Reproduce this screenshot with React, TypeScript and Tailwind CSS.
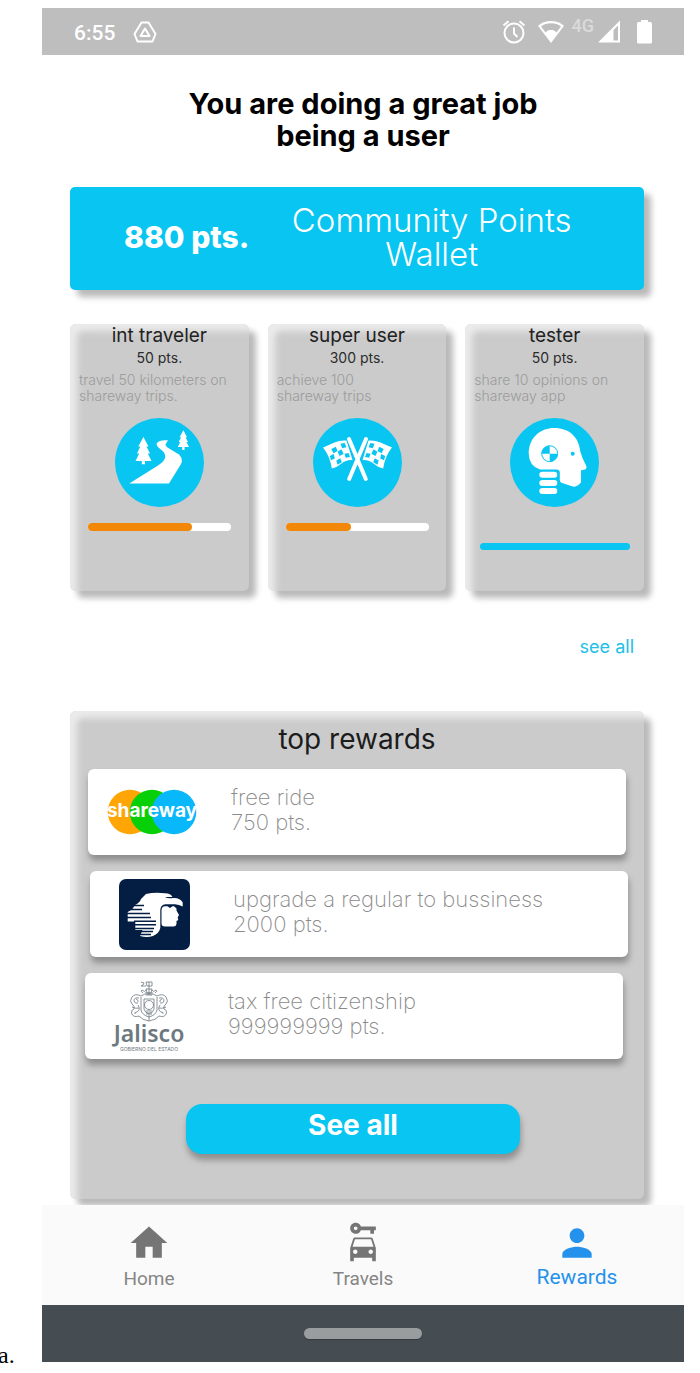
import type { ReactNode } from "react";
import { MdCarRental, MdHome, MdPerson } from "react-icons/md";

const SOFT_PANEL =
  "rounded-md bg-[#cbcbcb] shadow-[7px_7px_6px_#b9b9b9,inset_7px_7px_6px_#ebebeb]";

function StatusBar() {
  return (
    <header className="flex h-[47px] items-center bg-[#bebebe] px-8 text-white">
      <span className="pt-0.5 font-[Roboto] text-[21px] leading-6 font-medium">6:55</span>
      <svg className="ml-[18px] h-6 w-6" viewBox="0 0 24 24" fill="none" stroke="currentColor" strokeWidth="2" strokeLinejoin="round">
        <path d="M8.500 2.500h7L22.500 14l-3 7.500H4.500L1.500 14Z" />
        <path d="M12 8.500 16.500 16h-9Z" />
      </svg>
      <div className="ml-auto flex items-center">
        <svg className="h-6 w-6" viewBox="0 0 24 24" fill="none" stroke="currentColor" strokeWidth="2">
          <circle cx="12" cy="13" r="9.500" />
          <path d="M12 7.500v6l3.500 3.500M1.500 5.500 6.500 1.300M22.500 5.500 17.500 1.300" />
        </svg>
        <svg className="ml-3 h-6 w-[26px]" viewBox="0 0 26 24">
          <path fill="currentColor" d="M13 1C8 1 3.500 2.800 0 5.800L13 23 26 5.800C22.500 2.800 18 1 13 1Z" />
          <path fill="#bebebe" d="M13 3.200c-4 0-7.300 1.200-10 3.200l4.600 6.100C9 10.500 11 10 13 10s4 .5 5.400 2.500L23 6.400c-2.700-2-6-3.200-10-3.200Z" />
        </svg>
        <span className="mb-3 ml-2 font-[Roboto] text-lg leading-none font-medium text-[#dadada]">4G</span>
        <svg className="ml-1 h-6 w-[23px]" viewBox="0 0 23 24">
          <path fill="currentColor" d="M0 22.500 22 .5v22Z" />
          <path fill="#bebebe" d="M15.500 10 20 5.500V20.500h-4.500Z" />
        </svg>
        <svg className="ml-4 h-6 w-[15px]" viewBox="0 0 15 24" fill="currentColor">
          <path d="M4 0h7v2h2.500Q15 2 15 3.500v18.500q0 1.500-1.500 1.500h-12Q0 23.500 0 22v-18.500Q0 2 1.500 2H4Z" />
        </svg>
      </div>
    </header>
  );
}

function RoadIcon() {
  return (
    <svg className="h-[89px] w-[89px]" viewBox="0 0 89 89" fill="white">
      <circle cx="44.500" cy="44.500" r="44.500" fill="#08c5f2" />
      <path d="M14.300 65.500H54L66 46Q68.500 41 64 36.500L52.500 29.500Q49.500 27 51 25.500L53 22.300Q44 21.500 41.500 25.500Q41.500 28.500 46.500 32Q51 35.500 50 40Q49 43.500 43 47.500Z" />
      <path d="M28.400 19 33.500 28.500h-2L35 35.500h-2.200L36.500 43H30v3.300h-3.200V43h-6.300l3.700-7.500H22l3.300-7h-2Z" />
      <path d="M68.400 12.300 72 19.300h-1.500L73 24h-1.500l2.500 5h-4.500v3h-2.300v-3H62.700l2.500-5h-1.500l2.400-4.700h-1.500Z" />
    </svg>
  );
}

function RaceFlag() {
  return (
    <g>
      <path fill="white" d="M10 29.500Q16 27 21.500 24.500T33.500 22.500L39.500 42Q33 41.500 28.500 45.500T18.800 50.500Q17 38 10 29.500Z" />
      <g fill="#08c5f2">
        <path d="m27.500 25.800 4.200-.8 1.700 4.200-4.200 1Z" />
        <path d="m18.300 31 4.500-2.200 1.700 4.200-4 2.200Z" />
        <path d="m24.600 33.700 3.800-2.400 2.200 4.500-4 2.200Z" />
        <path d="m31.500 35.800 4-.8 1.500 4-4.300.8Z" />
        <path d="m16.800 38 4-2 1 4.500-3.800 1.700Z" />
        <path d="m23.300 42.500 4-2.300 1.500 4-4.300 2.500Z" />
      </g>
    </g>
  );
}

function FlagsIcon() {
  return (
    <svg className="h-[89px] w-[89px]" viewBox="0 0 89 89">
      <circle cx="44.500" cy="44.500" r="44.500" fill="#08c5f2" />
      <RaceFlag />
      <g transform="translate(89 0) scale(-1 1)">
        <RaceFlag />
      </g>
      <g fill="none" strokeLinecap="round">
        <path stroke="#08c5f2" strokeWidth="5.500" d="M36 21 52.800 61M53 21 36.200 61" />
        <path stroke="white" strokeWidth="4" d="M36 21 52.800 61M53 21 36.200 61" />
      </g>
    </svg>
  );
}

function DummyIcon() {
  return (
    <svg className="h-[89px] w-[89px]" viewBox="0 0 89 89" fill="white">
      <circle cx="44.500" cy="44.500" r="44.500" fill="#08c5f2" />
      <path d="M44.500 10C59 10 69 19 70.300 33.500Q72 40 76.300 48Q77.500 51.500 73 52L71 52.300V64Q70.500 66 66 68.300Q64.500 69 62 68.300L51.500 64.700Q49.800 64 49.800 62V54Q49.500 51.500 47 51.500H30Q19 48 18.700 35.500C18.700 20 30 10 44.500 10Z" />
      <rect x="29.300" y="53.700" width="18" height="6" rx="3" />
      <rect x="29.300" y="61.900" width="18" height="6" rx="3" />
      <rect x="29.300" y="70" width="18" height="6" rx="3" />
      <g fill="#08c5f2">
        <circle cx="62.700" cy="35.700" r="2" />
        <path d="M39.700 35.700v-8a8 8 0 0 0-8 8ZM39.700 35.700v8a8 8 0 0 0 8-8Z" />
        <circle cx="39.700" cy="35.700" r="8" fill="none" stroke="#08c5f2" />
      </g>
    </svg>
  );
}

type Achievement = {
  title: string;
  points: string;
  text: [string, string];
  icon: ReactNode;
  percent: number;
};

const achievements: Achievement[] = [
  { title: "int traveler", points: "50 pts.", text: ["travel 50 kilometers on", "shareway trips."], icon: <RoadIcon />, percent: 73 },
  { title: "super user", points: "300 pts.", text: ["achieve 100", "shareway trips"], icon: <FlagsIcon />, percent: 46 },
  { title: "tester", points: "50 pts.", text: ["share 10 opinions on", "shareway app"], icon: <DummyIcon />, percent: 100 },
];

function AchievementCard({ title, points, text, icon, percent }: Achievement) {
  const done = percent === 100;
  return (
    <article className={`flex h-[267px] flex-1 flex-col items-center ${SOFT_PANEL}`}>
      <h2 className="text-[19px] leading-6 text-[#222]">{title}</h2>
      <p className="mt-0.5 text-[14px] leading-4 text-[#2c2c2c]">{points}</p>
      <p className="mt-1.5 w-full pr-2 pl-[9px] text-[14px] leading-4 font-light text-[#9b9b9b]">
        {text[0]}
        <br />
        {text[1]}
      </p>
      <div className="mt-3.5">{icon}</div>
      {done ? (
        <div role="progressbar" aria-label={title} aria-valuenow={percent} className="mt-9 h-[7px] w-[150px] rounded-full bg-[#08c5f2]" />
      ) : (
        <div role="progressbar" aria-label={title} aria-valuenow={percent} className="mt-4 h-2 w-[143px] rounded-full bg-white">
          <div className="h-full rounded-full bg-[#f38707]" style={{ width: `${percent}%` }} />
        </div>
      )}
    </article>
  );
}

function SharewayLogo() {
  return (
    <svg className="h-[46px] w-[90px]" viewBox="0 0 90 46">
      <circle cx="23" cy="23" r="22.300" fill="#ffa505" />
      <circle cx="45" cy="23" r="22.300" fill="#08d008" />
      <circle cx="67" cy="23" r="22.300" fill="#08b8fb" />
      <text x="45" y="28" textAnchor="middle" fill="white" fontFamily="Inter, sans-serif" fontSize="19" fontWeight="700">
        shareway
      </text>
    </svg>
  );
}

function EagleLogo() {
  return (
    <svg className="h-[71px] w-[71px]" viewBox="0 0 71 71">
      <rect width="71" height="71" rx="7" fill="#031d43" />
      <path
        fill="white"
        d="M27 15Q36 13 46 14.300Q52 14.500 53.500 18H46Q49 20 54 19Q61 18.500 63.700 23.500V27.500Q60 25.500 56 25.300H46.500Q41.500 26 41.300 31V49Q40 54.500 34 57Q28 59 21 57L23.500 51H16.300V42.500H8.700V33L13 30.500L16 26Q21 23.500 22 20Z"
      />
      <path
        stroke="#031d43"
        strokeWidth="1.400"
        fill="none"
        d="M12 26.500h13M8 30.500h15M8 34.500h23M8 38.500h24M15 42.300h22M15 45.800h22M15 49.500h20M20 52.500h14M20 55.500h12"
      />
      <path
        fill="white"
        d="M42.500 31Q42.800 27.500 46 27.300H48.500L51 29L53.500 27.300H55L57.500 29.500V31.500L60 36L58.700 38.500L59.300 41L57.500 42V45Q57 47.500 54.500 47.500H46Q42.500 47.500 42.500 44.500Z"
      />
    </svg>
  );
}

function CrestHalf() {
  return (
    <g>
      <path d="M20 13Q15 12.500 12 15Q6 12 3 16Q0 20 3 23Q6 25 5 28Q2 29 2.500 32Q4 37 10 35Q13 39 20 40" />
      <path d="M10 17Q5 16 5 20Q6 23 9 22M9 24Q12 29 8 31Q5 31 6 33M12 16V29Q13 34 20 36M15 18V28Q16 32 20 33M7 18Q10 19 9 21M3 26Q7 28 10 27M14 12Q11 10 13 9Q16 12 17 9" />
    </g>
  );
}

function JaliscoLogo() {
  return (
    <div className="flex flex-col items-center text-[#6d7980]">
      <svg className="h-[42px] w-10" viewBox="0 0 40 42" fill="none" stroke="currentColor" strokeWidth=".8">
        <CrestHalf />
        <g transform="translate(40 0) scale(-1 1)">
          <CrestHalf />
        </g>
        <circle cx="20" cy="24" r="4.500" />
        <path d="M15 18h10M18 29v5M22 29v5M20 28v12M16 12h8M17 14h6M20 5v9M17 8h6l-1 4h-4ZM12 1l3 1-1 2-2 1h5M17 1h6v4h-5ZM20 1v4" />
      </svg>
      <span className="font-['Noto_Sans'] text-[23px] leading-5 font-semibold">Jalisco</span>
      <span className="mt-1 text-[5px] leading-[5px] whitespace-nowrap">GOBIERNO DEL ESTADO</span>
    </div>
  );
}

const rewards = [
  { name: "free ride", points: "750 pts.", logo: <SharewayLogo />, place: "ml-[18px] mr-[18px]" },
  { name: "upgrade a regular to bussiness", points: "2000 pts.", logo: <EagleLogo />, place: "ml-5 mr-4" },
  { name: "tax free citizenship", points: "999999999 pts.", logo: <JaliscoLogo />, place: "ml-[15px] mr-[21px]" },
];

export default function App() {
  return (
    <div className="flex bg-white pt-2 font-[Inter,sans-serif]">
      <aside className="flex w-[42px] shrink-0 items-end overflow-hidden pb-1">
        <p className="-ml-0.5 font-['Liberation_Serif'] text-2xl leading-7">a.</p>
      </aside>
      <div className="mr-4 mb-[11px] min-w-0 flex-1">
        <StatusBar />
        <main className="px-7 pt-[33px] pr-10">
          <h1 className="pl-3 text-center text-[29px] leading-8 font-bold text-black">
            You are doing a great job
            <br />
            being a user
          </h1>

          <section className="mt-[35px] flex h-[103px] items-center rounded-[5px] bg-[#08c5f2] pr-[70px] pb-1 pl-[54px] text-white shadow-[7px_7px_6px_#b9b9b9]">
            <strong className="shrink-0 text-[30px] leading-8 font-extrabold">880 pts.</strong>
            <p className="flex-1 pl-10 text-center text-[33px] leading-[34px] font-light whitespace-nowrap">
              Community Points
              <br />
              Wallet
            </p>
          </section>

          <section className="mt-[34px] flex gap-[19px]">
            {achievements.map((a) => (
              <AchievementCard key={a.title} {...a} />
            ))}
          </section>

          <div className="mt-11 flex justify-end pr-2.5">
            <a href="#achievements" className="text-lg leading-6 text-[#22bfe8]">
              see all
            </a>
          </div>

          <section className={`mt-[52px] flex h-[488px] flex-col ${SOFT_PANEL}`}>
            <h2 className="mt-3 text-center text-[28px] leading-8 text-[#1c1c1c]">top rewards</h2>
            <ul className="mt-3.5 flex flex-col gap-4">
              {rewards.map((r) => (
                <li
                  key={r.name}
                  className={`flex h-[86px] items-center rounded-md bg-white shadow-[1px_6px_6px_#8f8f8f] ${r.place}`}
                >
                  <div className="flex w-[128px] shrink-0 justify-center">{r.logo}</div>
                  <p className="pb-1 pl-[15px] text-[22px] leading-[25px] font-extralight text-[#8a8a8a]">
                    {r.name}
                    <br />
                    {r.points}
                  </p>
                </li>
              ))}
            </ul>
            <button
              type="button"
              className="mt-[45px] mr-2 h-[50px] w-[334px] self-center rounded-2xl bg-[#08c5f2] pb-2 text-[28px] leading-8 font-bold text-white shadow-[1px_6px_6px_#8f8f8f]"
            >
              See all
            </button>
          </section>
        </main>

        <nav className="relative mt-1.5 grid h-[100px] grid-cols-3 bg-[#fafafa] font-[Roboto] text-[#757575]">
          <a href="#home" className="flex flex-col items-center pt-4 text-[19px] leading-6">
            <MdHome size={44} />
            <span className="mt-0.5 text-[#858585]">Home</span>
          </a>
          <a href="#travels" className="flex flex-col items-center pt-4 text-[19px] leading-6">
            <MdCarRental size={44} />
            <span className="mt-0.5 text-[#858585]">Travels</span>
          </a>
          <a href="#rewards" className="flex flex-col items-center pt-4 text-[21px] leading-6 text-[#2492ec]">
            <MdPerson size={44} />
            <span>Rewards</span>
          </a>
        </nav>
        <footer className="flex h-[57px] items-center justify-center bg-[#454d52]">
          <div className="h-[11px] w-[118px] rounded-full bg-[#9a9d9e] shadow-[0_1px_1px_#333a3e]" />
        </footer>
      </div>
    </div>
  );
}
